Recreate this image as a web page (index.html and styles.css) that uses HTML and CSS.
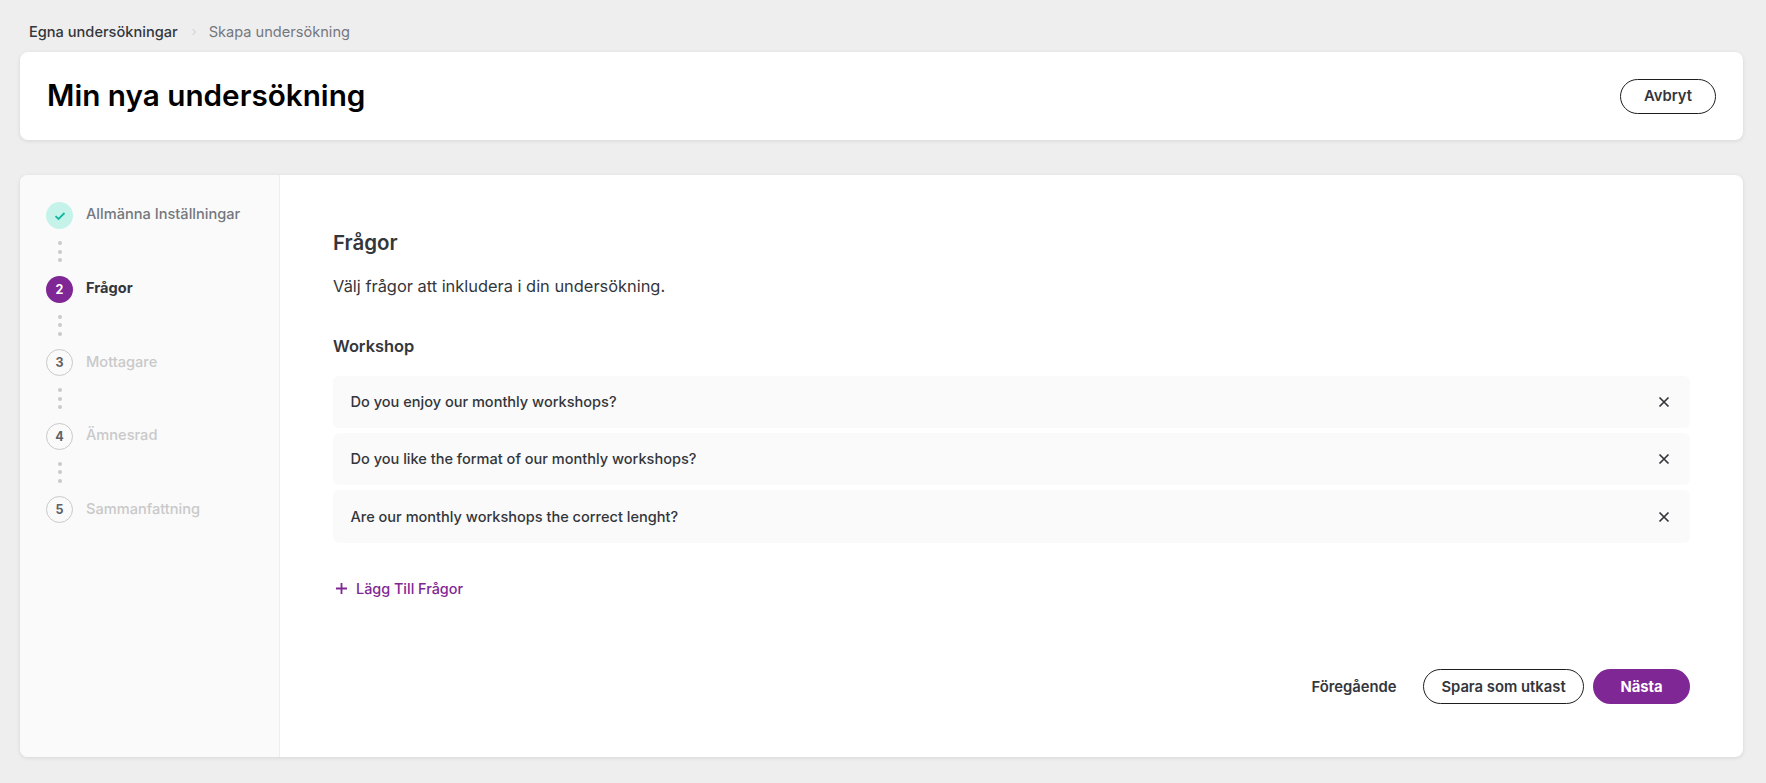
FILE: index.html
```html
<!DOCTYPE html>
<html lang="sv">
<head>
  <meta charset="UTF-8" />
  <title>Min nya undersökning</title>
  <link rel="stylesheet" href="styles.css">
</head>
<body>
  <nav class="crumbs">
    <a class="crumb-link">Egna undersökningar</a>
    <svg class="crumb-sep" width="6" height="8" viewBox="0 0 6 8"><path d="M1.5 1l3 3-3 3" fill="none" stroke="#c9c9c9" stroke-width="1"/></svg>
    <span class="crumb-current">Skapa undersökning</span>
  </nav>

  <header class="title-card">
    <h1>Min nya undersökning</h1>
    <button class="btn btn-outline btn-cancel">Avbryt</button>
  </header>

  <main class="wizard">
    <!-- steps -->
    <aside class="steps">
      <div class="step step-done">
        <span class="step-dot">
          <svg width="12" height="10" viewBox="0 0 12 10"><path d="M1.5 5.2l3 2.8 6-6" fill="none" stroke="#14b8a0" stroke-width="1.8"/></svg>
        </span>
        <span class="step-label">Allmänna Inställningar</span>
      </div>
      <div class="step-link"><i></i><i></i><i></i></div>
      <div class="step step-active">
        <span class="step-dot">2</span>
        <span class="step-label">Frågor</span>
      </div>
      <div class="step-link"><i></i><i></i><i></i></div>
      <div class="step">
        <span class="step-dot">3</span>
        <span class="step-label">Mottagare</span>
      </div>
      <div class="step-link"><i></i><i></i><i></i></div>
      <div class="step">
        <span class="step-dot">4</span>
        <span class="step-label">Ämnesrad</span>
      </div>
      <div class="step-link"><i></i><i></i><i></i></div>
      <div class="step">
        <span class="step-dot">5</span>
        <span class="step-label">Sammanfattning</span>
      </div>
    </aside>

    <!-- questions -->
    <section class="content">
      <h2>Frågor</h2>
      <p class="intro">Välj frågor att inkludera i din undersökning.</p>
      <h3>Workshop</h3>

      <ul class="questions">
        <li>
          <span>Do you enjoy our monthly workshops?</span>
          <svg width="12" height="12" viewBox="0 0 12 12"><path d="M1.5 1.5l9 9M10.5 1.5l-9 9" stroke="#33363b" stroke-width="1.7"/></svg>
        </li>
        <li>
          <span>Do you like the format of our monthly workshops?</span>
          <svg width="12" height="12" viewBox="0 0 12 12"><path d="M1.5 1.5l9 9M10.5 1.5l-9 9" stroke="#33363b" stroke-width="1.7"/></svg>
        </li>
        <li>
          <span>Are our monthly workshops the correct lenght?</span>
          <svg width="12" height="12" viewBox="0 0 12 12"><path d="M1.5 1.5l9 9M10.5 1.5l-9 9" stroke="#33363b" stroke-width="1.7"/></svg>
        </li>
      </ul>

      <a class="add-link">
        <svg width="13" height="13" viewBox="0 0 13 13"><path d="M6.5 1v11M1 6.5h11" stroke="#7f2795" stroke-width="1.8"/></svg>
        Lägg Till Frågor
      </a>

      <div class="actions">
        <button class="btn btn-plain">Föregående</button>
        <button class="btn btn-outline btn-draft">Spara som utkast</button>
        <button class="btn btn-primary">Nästa</button>
      </div>
    </section>
  </main>
</body>
</html>
```

FILE: styles.css
```css
/* base */
* { margin: 0; padding: 0; box-sizing: border-box; }
body {
  font-family: "Inter", "Noto Sans", sans-serif;
  background: #eeeeee;
  color: #33363b;
  padding: 0 23px 0 20px;
  min-height: 100vh;
}

/* breadcrumb */
.crumbs {
  display: flex;
  align-items: center;
  height: 52px;
  padding: 12px 0 0 9px;
  font-size: 14.6px;
}
.crumb-link { color: #33363b; font-weight: 500; }
.crumb-sep { margin: 0 12px 0 13px; }
.crumb-current { color: #74777d; }

/* title card */
.title-card {
  display: flex;
  align-items: center;
  justify-content: space-between;
  height: 88px;
  padding: 0 27px 0 27px;
  background: #fff;
  border-radius: 8px;
  box-shadow: 0 1px 4px rgba(0,0,0,0.1);
}
.title-card h1 {
  font-size: 29.7px;
  font-weight: 600;
  color: #000;
  padding-bottom: 2px;
}

/* buttons */
.btn {
  font-family: inherit;
  font-size: 14.8px;
  font-weight: 600;
  height: 35px;
  border-radius: 18px;
  border: 0;
  background: none;
  color: #33363b;
  cursor: pointer;
}
.btn-outline { background: #fff; border: 1px solid #1e1e1e; }
.btn-cancel { width: 96px; }
.btn-draft { width: 161px; margin-left: 26px; }
.btn-plain { width: 86px; }
.btn-primary {
  width: 97px;
  margin-left: 9px;
  background: #7f2795;
  color: #fff;
  font-weight: 700;
}

/* wizard */
.wizard {
  display: flex;
  height: 582px;
  margin-top: 35px;
  background: #fff;
  border-radius: 8px;
  box-shadow: 0 1px 4px rgba(0,0,0,0.1);
  overflow: hidden;
}
.steps {
  flex: 0 0 260px;
  padding: 27px 0 0 26px;
  background: #fafafa;
  border-right: 1px solid #eeeeee;
}
.step {
  display: flex;
  align-items: center;
  gap: 13px;
  height: 27px;
  font-size: 14.6px;
  font-weight: 500;
  color: #c9c9c9;
}
.step-label { padding-bottom: 2px; }
.step-done .step-label { padding-bottom: 4px; }
.step-dot {
  display: flex;
  align-items: center;
  justify-content: center;
  width: 27px;
  height: 27px;
  border-radius: 50%;
  border: 1px solid #c9c9c9;
  color: #5f6267;
  font-size: 12.5px;
  font-weight: 700;
}
.step-done { color: #74777d; }
.step-done .step-dot { background: #c5f3ea; border: 0; }
.step-active { color: #33363b; font-weight: 700; }
.step-active .step-dot { background: #7f2795; border: 0; color: #fff; }
.step-link {
  display: flex;
  flex-direction: column;
  gap: 4.5px;
  height: 46.6px;
  padding: 12px 0 0 12px;
}
.step-link i {
  width: 4px;
  height: 4px;
  border-radius: 50%;
  background: #c9c9c9;
}

/* content */
.content {
  flex: 1;
  padding: 55px 53px 0 53px;
}
.content h2 {
  font-size: 20.5px;
  font-weight: 600;
  line-height: 25px;
}
.intro {
  margin-top: 20px;
  font-size: 16.4px;
  line-height: 22px;
}
.content h3 {
  margin-top: 38px;
  font-size: 16.4px;
  font-weight: 600;
  line-height: 22px;
}
.questions {
  list-style: none;
  display: flex;
  flex-direction: column;
  gap: 5px;
  margin-top: 19px;
}
.questions li {
  display: flex;
  align-items: center;
  justify-content: space-between;
  height: 52px;
  padding: 0 20px 0 17.5px;
  background: #fafafa;
  border-radius: 6px;
  font-size: 14.55px;
  font-weight: 500;
}
.questions li:last-child { height: 53px; }
.add-link {
  display: flex;
  align-items: center;
  gap: 8px;
  margin: 37px 0 0 2px;
  font-size: 14.4px;
  font-weight: 500;
  color: #7f2795;
}
.actions {
  display: flex;
  align-items: center;
  justify-content: flex-end;
  margin-top: 72px;
}
```
